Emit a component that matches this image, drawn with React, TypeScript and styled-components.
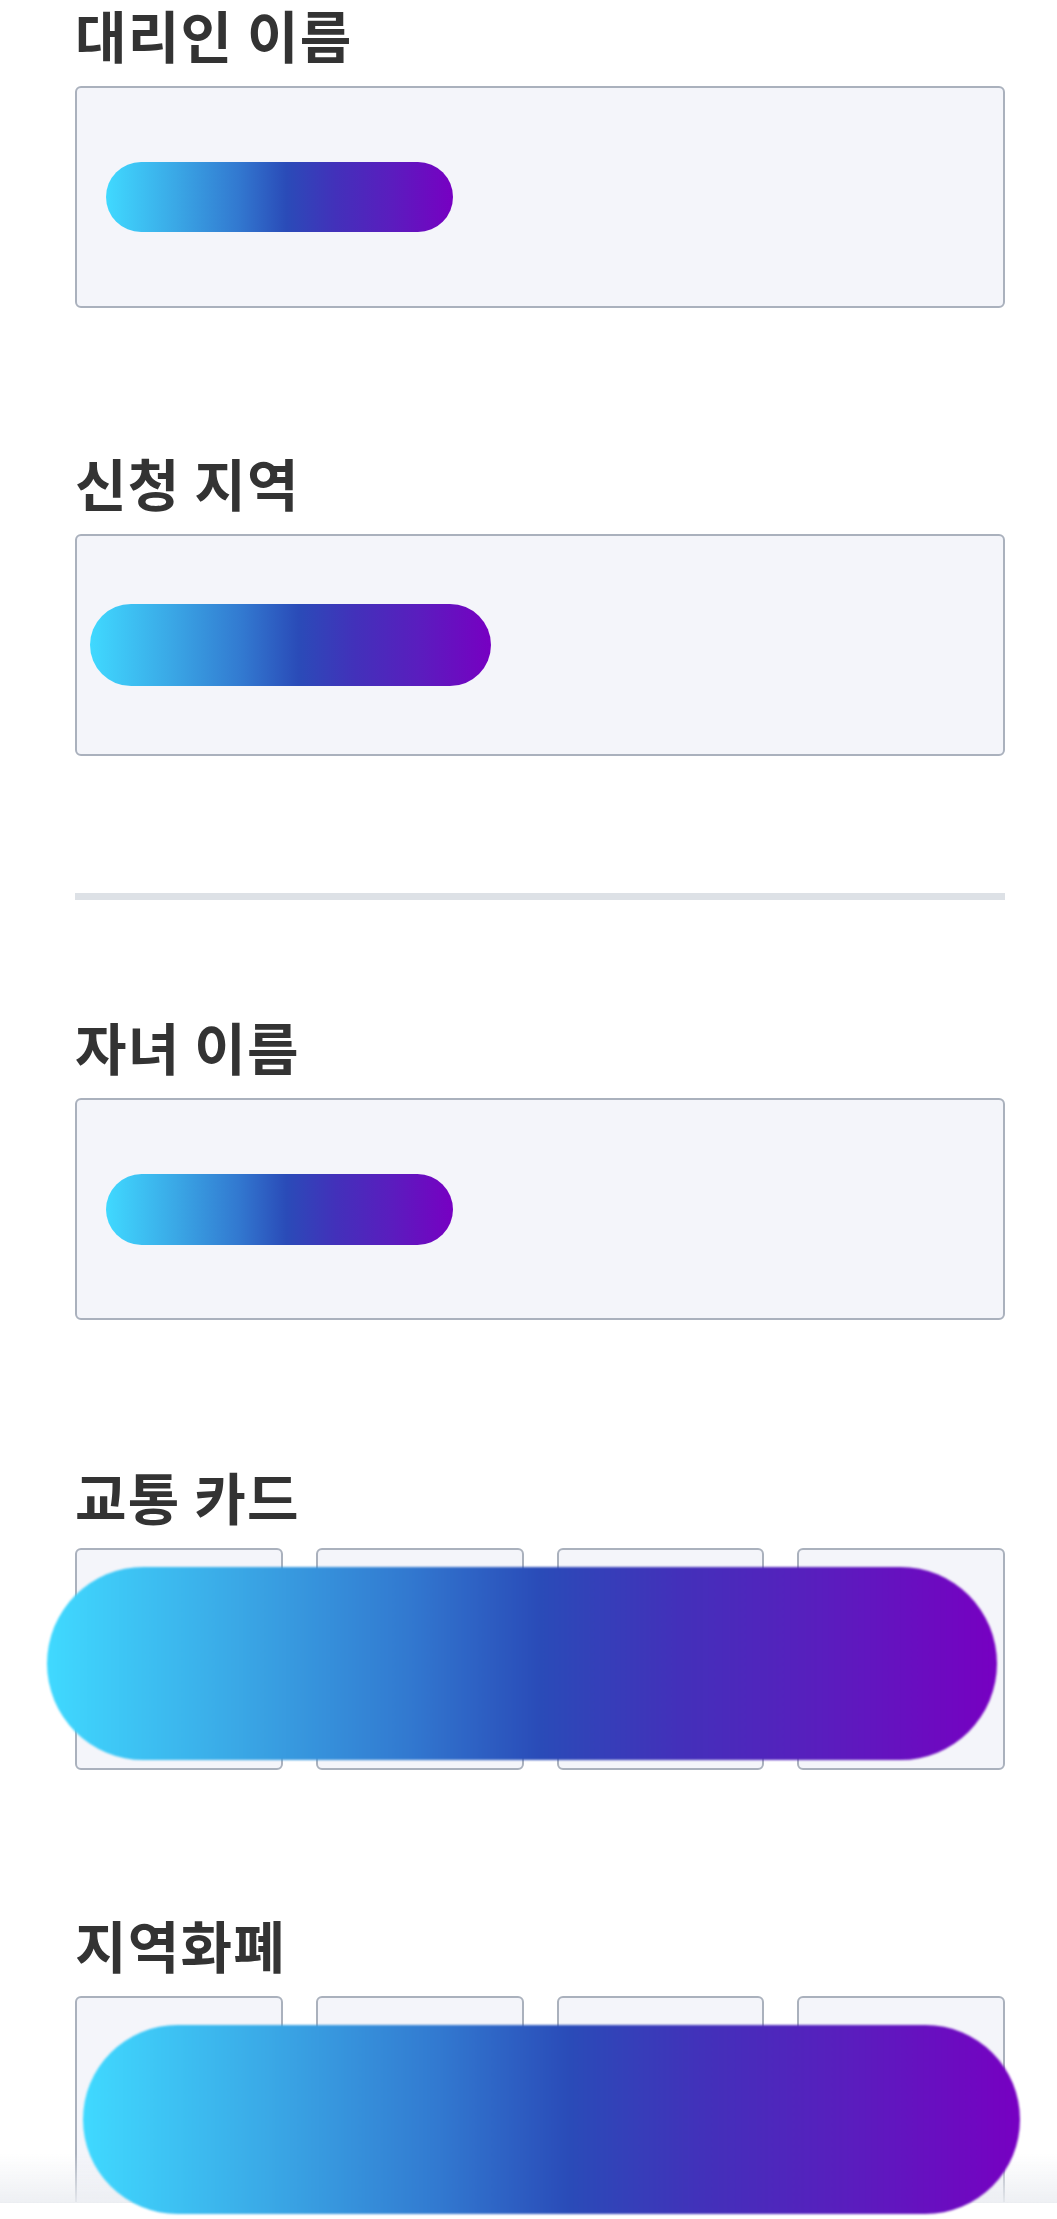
import styled, { createGlobalStyle } from 'styled-components'

const GlobalStyle = createGlobalStyle`
  html, body {
    margin: 0;
    padding: 0;
    background: #ffffff;
  }
  body {
    font-family: 'Noto Sans CJK KR', 'Noto Sans', sans-serif;
  }
`

const Page = styled.div`
  display: flex;
  flex-direction: column;
  padding: 5px 52px 0 75px;
`

const Section = styled.section<{ $gap: number }>`
  display: flex;
  flex-direction: column;
  margin-top: ${(p) => p.$gap}px;
`

const Label = styled.h2`
  margin: 0 0 23px;
  font-size: 56px;
  line-height: 58px;
  font-weight: 700;
  color: #333333;
  letter-spacing: 1.2px;
`

const Field = styled.div<{ $inset: number }>`
  box-sizing: border-box;
  height: 222px;
  display: flex;
  align-items: center;
  padding-left: ${(p) => p.$inset}px;
  background: #f4f5fa;
  border: 2px solid #aab1bd;
  border-radius: 6px;
`

const ChoiceGrid = styled.div`
  position: relative;
  display: grid;
  grid-template-columns: repeat(4, 1fr);
  gap: 33px;
`

const Choice = styled.div`
  box-sizing: border-box;
  height: 222px;
  background: #f4f5fa;
  border: 2px solid #aab1bd;
  border-radius: 6px;
`

const Divider = styled.hr`
  margin: 137px 0 0;
  border: 0;
  height: 7px;
  background: #dde1e6;
`

const Shimmer = styled.div<{ $w: number; $h: number; $soft?: boolean }>`
  width: ${(p) => p.$w}px;
  height: ${(p) => p.$h}px;
  flex-shrink: 0;
  border-radius: ${(p) => p.$h / 2}px;
  background: linear-gradient(
    90deg,
    #40d9ff 0%,
    #3aa8e6 20%,
    #3279d0 38%,
    #2a4bb8 52%,
    #4231ba 66%,
    #5a1dbe 82%,
    #7700c2 100%
  );
  filter: blur(${(p) => (p.$soft ? 1.2 : 0.6)}px);
`

const OverlayShimmer = styled(Shimmer)<{ $left: number; $top: number }>`
  position: absolute;
  left: ${(p) => p.$left}px;
  top: ${(p) => p.$top}px;
  z-index: 20;
`

const BottomBar = styled.div`
  position: fixed;
  left: 0;
  right: 0;
  bottom: 0;
  height: 16px;
  background: #ffffff;
  border-top: 1px solid #e8eaee;
  z-index: 10;

  &::before {
    content: '';
    position: absolute;
    left: 0;
    right: 0;
    bottom: 100%;
    height: 50px;
    background: linear-gradient(180deg, rgba(240, 241, 245, 0) 0%, rgba(236, 238, 242, 0.9) 100%);
  }
`

export default function App() {
  return (
    <>
      <GlobalStyle />
      <Page>
        <Section $gap={0}>
          <Label>대리인 이름</Label>
          <Field $inset={29}>
            <Shimmer $w={347} $h={70} />
          </Field>
        </Section>

        <Section $gap={145}>
          <Label>신청 지역</Label>
          <Field $inset={13}>
            <Shimmer $w={401} $h={82} />
          </Field>
        </Section>

        <Divider />

        <Section $gap={117}>
          <Label>자녀 이름</Label>
          <Field $inset={29}>
            <Shimmer $w={347} $h={71} />
          </Field>
        </Section>

        <Section $gap={147}>
          <Label>교통 카드</Label>
          <ChoiceGrid>
            <Choice />
            <Choice />
            <Choice />
            <Choice />
            <OverlayShimmer $left={-28} $top={19} $w={950} $h={193} $soft />
          </ChoiceGrid>
        </Section>

        <Section $gap={145}>
          <Label>지역화폐</Label>
          <ChoiceGrid>
            <Choice />
            <Choice />
            <Choice />
            <Choice />
            <OverlayShimmer $left={8} $top={29} $w={937} $h={189} $soft />
          </ChoiceGrid>
        </Section>
      </Page>
      <BottomBar />
    </>
  )
}
